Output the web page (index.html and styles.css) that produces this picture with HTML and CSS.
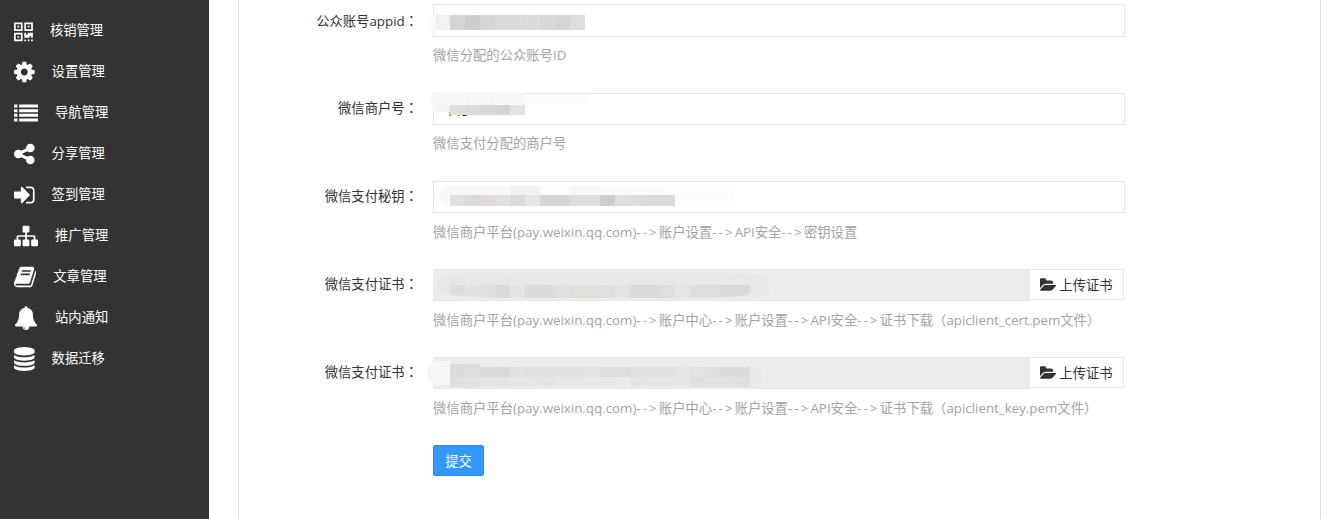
FILE: index.html
```html
<!DOCTYPE html>
<html lang="zh-CN">
<head>
<meta charset="utf-8">
<title>支付设置</title>
<link rel="stylesheet" href="styles.css">
</head>
<body>
<aside class="sidebar">
  <ul class="nav">
    <li class="nav-item"><svg class="ico w19" viewBox="0 0 1408 1792"><path fill-rule="evenodd" d="M0 256h640v640H0zM128 384v384h384V384zM256 512h128v128H256zM768 256h640v640H768zM896 384v384h384V384zM1024 512h128v128h-128zM0 1024h640v640H0zM128 1152v384h384v-384zM256 1280h128v128H256zM768 1024h128v128h128v-128h384v384h-128v-128h-128v128H768zM768 1536h128v128H768zM1024 1536h128v128h-128zM1280 1536h128v128h-128z"/></svg><span>核销管理</span></li>
    <li class="nav-item"><svg class="ico w21" viewBox="128 0 1536 1792"><path d="M1152 896q0-106-75-181t-181-75-181 75-75 181 75 181 181 75 181-75 75-181zm512-109v222q0 12-8 23t-20 13l-185 28q-19 54-39 91 35 50 107 138 10 12 10 25t-9 23q-27 37-99 108t-94 71q-12 0-26-9l-138-108q-44 23-91 38-16 136-29 186-7 28-36 28h-222q-14 0-24.5-8.5t-11.5-21.5l-28-184q-49-16-90-37l-141 107q-10 9-25 9-14 0-25-11-126-114-165-168-7-10-7-23 0-12 8-23 15-21 51-66.5t54-70.5q-27-50-41-99l-183-27q-13-2-21-12.5t-8-23.5v-222q0-12 8-23t19-13l186-28q14-46 39-92-40-57-107-138-10-12-10-24 0-10 9-23 26-36 98.5-107.5t94.5-71.5q13 0 26 10l138 107q44-23 91-38 16-136 29-186 7-28 36-28h222q14 0 24.5 8.5t11.5 21.5l28 184q49 16 90 37l142-107q9-9 24-9 13 0 25 10 129 119 165 170 7 8 7 22 0 12-8 23-15 21-51 66.5t-54 70.5q26 50 41 98l183 28q13 2 21 12.5t8 23.5z"/></svg><span>设置管理</span></li>
    <li class="nav-item"><svg class="ico w24" viewBox="0 0 1792 1792"><path d="M0 256h256v224H0zM384 256h1408v224H384zM0 608h256v224H0zM384 608h1408v224H384zM0 960h256v224H0zM384 960h1408v224H384zM0 1312h256v224H0zM384 1312h1408v224H384z"/></svg><span>导航管理</span></li>
    <li class="nav-item"><svg class="ico w21" viewBox="128 0 1536 1792"><path d="M1344 1024q133 0 226.5 93.5t93.5 226.5-93.5 226.5-226.5 93.5-226.5-93.5-93.5-226.5q0-12 2-34l-360-180q-92 86-218 86-133 0-226.5-93.5t-93.5-226.5 93.5-226.5 226.5-93.5q126 0 218 86l360-180q-2-22-2-34 0-133 93.5-226.5t226.5-93.5 226.5 93.5 93.5 226.5-93.5 226.5-226.5 93.5q-126 0-218-86l-360 180q2 22 2 34t-2 34l360 180q92-86 218-86z"/></svg><span>分享管理</span></li>
    <li class="nav-item"><svg class="ico w21" viewBox="128 0 1536 1792"><path d="M1312 896q0 26-19 45l-544 544q-19 19-45 19t-45-19-19-45v-288h-448q-26 0-45-19t-19-45v-384q0-26 19-45t45-19h448v-288q0-26 19-45t45-19 45 19l544 544q19 19 19 45zm352-352v704q0 119-84.5 203.5t-203.5 84.5h-320q-13 0-22.5-9.5t-9.5-22.5q0-4-1-20t-.5-26.5 3-23.5 10-19.5 20.5-6.5h320q66 0 113-47t47-113v-704q0-66-47-113t-113-47h-312l-11.5-1-11.5-3-8-5.5-7-9-2-13.5q0-4-1-20t-.5-26.5 3-23.5 10-19.5 20.5-6.5h320q119 0 203.5 84.5t84.5 203.5z"/></svg><span>签到管理</span></li>
    <li class="nav-item"><svg class="ico w24" viewBox="0 0 1792 1792"><path d="M1792 1248v320q0 40-28 68t-68 28h-320q-40 0-68-28t-28-68v-320q0-40 28-68t68-28h96v-192h-512v192h96q40 0 68 28t28 68v320q0 40-28 68t-68 28h-320q-40 0-68-28t-28-68v-320q0-40 28-68t68-28h96v-192h-512v192h96q40 0 68 28t28 68v320q0 40-28 68t-68 28h-320q-40 0-68-28t-28-68v-320q0-40 28-68t68-28h96v-192q0-52 38-90t90-38h512v-192h-96q-40 0-68-28t-28-68v-320q0-40 28-68t68-28h320q40 0 68 28t28 68v320q0 40-28 68t-68 28h-96v192h512q52 0 90 38t38 90v192h96q40 0 68 28t28 68z"/></svg><span>推广管理</span></li>
    <li class="nav-item"><svg class="ico w22" viewBox="64 0 1664 1792"><path d="M1703 478q40 57 18 129l-275 906q-19 64-76.5 107.5t-122.5 43.5h-923q-77 0-148.5-53.5t-99.5-131.5q-24-67-2-127 0-4 3-27t4-37q1-8-3-21.5t-3-19.5q2-11 8-21t16.5-23.5 16.5-23.5q23-38 45-91.5t30-91.5q3-10 .5-30t-.5-28q3-11 17-28t17-23q21-36 42-92t25-90q1-9-2.5-32t.5-28q4-13 22-30.5t22-22.5q19-26 42.5-84.5t27.5-96.5q1-8-3-25.5t-2-26.5q2-8 9-18t18-23 17-21q8-12 16.5-30.5t15-35 16-36 19.5-32 26.5-23.5 36-11.5 47.5 5.5l-1 3q38-9 51-9h761q74 0 114 56t18 130l-274 906q-36 119-71.5 153.5t-128.5 34.5h-869q-27 0-38 15-11 16-1 43 24 70 144 70h923q29 0 56-15.5t35-41.5l300-987q7-22 5-57 38 15 59 43zm-1064 2q-4 13 2 22.5t20 9.5h608q13 0 25.5-9.5t16.5-22.5l21-64q4-13-2-22.5t-20-9.5h-608q-13 0-25.5 9.5t-16.5 22.5zm-83 256q-4 13 2 22.5t20 9.5h608q13 0 25.5-9.5t16.5-22.5l21-64q4-13-2-22.5t-20-9.5h-608q-13 0-25.5 9.5t-16.5 22.5z"/></svg><span>文章管理</span></li>
    <li class="nav-item"><svg class="ico w24" viewBox="0 0 1792 1792"><path d="M912 1696q0-16-16-16-59 0-101.5-42.5t-42.5-101.5q0-16-16-16t-16 16q0 73 51.5 124.5t124.5 51.5q16 0 16-16zm816-288q0 52-38 90t-90 38h-448q0 106-75 181t-181 75-181-75-75-181h-448q-52 0-90-38t-38-90q50-42 91-88t85-119.5 74.5-158.5 50-206 19.5-260q0-152 117-282.5t307-158.5q-8-19-8-39 0-40 28-68t68-28 68 28 28 68q0 20-8 39 190 28 307 158.5t117 282.5q0 139 19.5 260t50 206 74.5 158.5 85 119.5 91 88z"/></svg><span>站内通知</span></li>
    <li class="nav-item"><svg class="ico w21" viewBox="128 0 1536 1792"><path d="M896 768q237 0 443-43t325-127v170q0 69-103 128t-280 93.5-385 34.5-385-34.5-280-93.5-103-128v-170q119 84 325 127t443 43zm0 768q237 0 443-43t325-127v170q0 69-103 128t-280 93.5-385 34.5-385-34.5-280-93.5-103-128v-170q119 84 325 127t443 43zm0-384q237 0 443-43t325-127v170q0 69-103 128t-280 93.5-385 34.5-385-34.5-280-93.5-103-128v-170q119 84 325 127t443 43zm0-1152q208 0 385 34.5t280 93.5 103 128v128q0 69-103 128t-280 93.5-385 34.5-385-34.5-280-93.5-103-128v-128q0-69 103-128t280-93.5 385-34.5z"/></svg><span>数据迁移</span></li>
  </ul>
</aside>
<main class="main">
  <div class="panel">
    <form class="form">
      <div class="row row-first">
        <label class="label">公众账号appid<span class="cjk-mid" lang="zh-Hant">：</span></label>
        <div class="field">
          <div class="input"><i class="glow g1"></i><i class="mosaic m1"></i></div>
          <p class="hint">微信分配的公众账号ID</p>
        </div>
      </div>
      <div class="row">
        <label class="label">微信商户号<span class="cjk-mid" lang="zh-Hant">：</span></label>
        <div class="field">
          <div class="input"><span class="value">145</span><i class="glow g2"></i><i class="mosaic m2"></i></div>
          <p class="hint">微信支付分配的商户号</p>
        </div>
      </div>
      <div class="row">
        <label class="label">微信支付秘钥<span class="cjk-mid" lang="zh-Hant">：</span></label>
        <div class="field">
          <div class="input"><i class="glow g3"></i><i class="mosaic m3"></i></div>
          <p class="hint hint-long">微信商户平台(pay.weixin.qq.com)<span class="arrow">--&gt;</span>账户设置<span class="arrow">--&gt;</span>API安全<span class="arrow">--&gt;</span>密钥设置</p>
        </div>
      </div>
      <div class="row">
        <label class="label">微信支付证书<span class="cjk-mid" lang="zh-Hant">：</span></label>
        <div class="field">
          <div class="group">
            <div class="input disabled"><i class="glow g4"></i><i class="mosaic m4"></i></div>
            <button type="button" class="upload"><svg class="folder" viewBox="0 0 1920 1792"><path d="M1815 952q0 31-31 66l-336 396q-43 51-120.5 86.5t-143.5 35.5h-1088q-34 0-60.5-13t-26.5-43q0-31 31-66l336-396q43-51 120.5-86.5t143.5-35.5h1088q34 0 60.5 13t26.5 43zm-343-344v160h-832q-94 0-197 47.5t-164 119.5l-337 396-5 6q0-4-.5-12.5t-.5-12.5v-960q0-92 66-158t158-66h320q92 0 158 66t66 158v32h544q92 0 158 66t66 158z"/></svg>上传证书</button>
          </div>
          <p class="hint hint-long">微信商户平台(pay.weixin.qq.com)<span class="arrow">--&gt;</span>账户中心<span class="arrow">--&gt;</span>账户设置<span class="arrow">--&gt;</span>API安全<span class="arrow">--&gt;</span>证书下载<span class="cjk-mid" lang="zh-Hant">（</span>apiclient_cert.pem文件<span class="cjk-mid" lang="zh-Hant">）</span></p>
        </div>
      </div>
      <div class="row">
        <label class="label">微信支付证书<span class="cjk-mid" lang="zh-Hant">：</span></label>
        <div class="field">
          <div class="group">
            <div class="input disabled"><i class="glow g5"></i><i class="mosaic m5"></i></div>
            <button type="button" class="upload"><svg class="folder" viewBox="0 0 1920 1792"><path d="M1815 952q0 31-31 66l-336 396q-43 51-120.5 86.5t-143.5 35.5h-1088q-34 0-60.5-13t-26.5-43q0-31 31-66l336-396q43-51 120.5-86.5t143.5-35.5h1088q34 0 60.5 13t26.5 43zm-343-344v160h-832q-94 0-197 47.5t-164 119.5l-337 396-5 6q0-4-.5-12.5t-.5-12.5v-960q0-92 66-158t158-66h320q92 0 158 66t66 158v32h544q92 0 158 66t66 158z"/></svg>上传证书</button>
          </div>
          <p class="hint hint-long">微信商户平台(pay.weixin.qq.com)<span class="arrow">--&gt;</span>账户中心<span class="arrow">--&gt;</span>账户设置<span class="arrow">--&gt;</span>API安全<span class="arrow">--&gt;</span>证书下载<span class="cjk-mid" lang="zh-Hant">（</span>apiclient_key.pem文件<span class="cjk-mid" lang="zh-Hant">）</span></p>
        </div>
      </div>
      <div class="row">
        <span></span>
        <div class="field"><button type="button" class="submit">提交</button></div>
      </div>
    </form>
  </div>
</main>
</body>
</html>
```
FILE: styles.css
```css
* { box-sizing: border-box; }
html, body { height: 100%; }
body {
  margin: 0;
  display: flex;
  overflow: hidden;
  background: #fff;
  font-family: "Open Sans", "Noto Sans CJK SC", sans-serif;
  font-size: 13.33px;
  color: #333;
}
.sidebar { width: 209px; flex: none; background: #333; color: #fff; }
.nav { list-style: none; margin: 0; padding: 9px 0 0 14px; }
.nav-item { height: 41px; display: flex; align-items: center; gap: 17px; }
.ico { height: 24px; margin-top: 3px; fill: #fff; flex: none; }
.w19 { width: 18.9px; }
.w21 { width: 20.6px; }
.w22 { width: 22.3px; }
.w24 { width: 24px; }
.main { flex: 1; padding: 0 7px 0 29px; }
.panel {
  height: 100%;
  border-left: 1px solid #ddd;
  border-right: 1px solid #ddd;
  padding-top: 4px;
}
.row {
  display: grid;
  grid-template-columns: 179px 692px;
  column-gap: 15px;
  margin-bottom: 28px;
}
.label { text-align: right; line-height: 30px; color: #333; }
.row-first .label { line-height: 33px; }
.row-first .input { height: 33px; }
.cjk-mid { font-family: "Noto Sans CJK TC", sans-serif; }
.arrow { letter-spacing: 2.1px; }
.field { min-width: 0; }
.input {
  position: relative;
  height: 32px;
  border: 1px solid #e6e6e6;
  background: #fff;
}
.value {
  display: block;
  padding-left: 12px;
  line-height: 30px;
  margin-top: 2px;
  color: #333;
}
.group { display: flex; align-items: flex-start; }
.group .input { flex: 1; }
.disabled { background: #ececec; border-color: #e8e8e8; }
.upload {
  width: 94px;
  height: 31px;
  margin-right: 1px;
  border: 1px solid #e6e6e6;
  border-left: 0;
  background: #fff;
  color: #333;
  font: inherit;
  padding: 0;
  display: flex;
  align-items: center;
  justify-content: center;
  gap: 2px;
}
.folder { width: 17px; height: 16px; fill: #333; }
.hint { margin: 8px 0 0; line-height: 20px; color: #a3a3a3; white-space: nowrap; }
.hint-long { margin: 9px 0 -1px; }
.submit {
  width: 51px;
  height: 31px;
  border: 1px solid #2d8ae8;
  border-radius: 2px;
  background: #39f;
  color: #fff;
  font: inherit;
  padding: 0;
}
.mosaic, .glow { position: absolute; display: block; }
.glow { background: #fafafa; border-radius: 10px; }

/* Blurred-out field values: 15px mosaic cells */
.g1 { left: -7px; top: 10px; width: 12px; height: 15px; background: #fbfbfb; }
.m1 {
  left: 1px; top: 10px; width: 150px; height: 15px;
  background: linear-gradient(90deg,
    #f3f2f0 0 15px, #d4d4d4 15px 30px, #cdcdcd 30px 45px, #d6d6d6 45px 60px, #dbd9d8 60px 75px,
    #d9dad9 75px 90px, #dcdcdc 90px 105px, #d8d8d8 105px 120px, #d4d6d5 120px 135px, #dddfdf 135px 150px);
}
.g2 {
  left: -3px; top: -2px; width: 94px; height: 13px; border-radius: 2px;
  background: linear-gradient(90deg, #f8f8f8 0 36px, #f6f6f6 36px 62px, #f8f8f8 62px 94px);
}
.g2::after {
  content: "";
  position: absolute;
  left: 94px; top: 2px; width: 65px; height: 11px;
  background: #fcfcfc;
}
.m2 {
  left: 16px; top: 11px; width: 75px; height: 10px;
  background: linear-gradient(90deg, #dde0dd 0 15px, #dcdcdc 15px 30px, #d8d8d8 30px 45px, #d5d5d5 45px 60px, #e2e4e2 60px 75px);
}
.m2::before {
  content: "";
  position: absolute;
  left: -15px; top: 0; width: 15px; height: 7px;
  background: #f6f1f1;
}
.g3 {
  left: 5px; top: 4px; width: 296px; height: 20px;
  background: linear-gradient(90deg, #f8f8f8 0 66px, #fbfbfb 66px 71px, #f2f2f2 71px 101px, #fcfcfc 101px 131px, #f7f7f7 131px 161px, #fbfbfb 161px 221px, #fcfcfc 221px);
}
.m3 {
  left: 16px; top: 13px; width: 225px; height: 11px;
  background: linear-gradient(90deg,
    #dee0e2 0 15px, #dcd9d9 15px 30px, #e0dbd8 30px 45px, #e0e0e0 45px 60px, #dadada 60px 75px,
    #e5e5e5 75px 90px, #d6d6d6 90px 105px, #d5d7d5 105px 120px, #dddddd 120px 135px, #dfdddb 135px 150px,
    #cfcdd0 150px 165px, #dfdfdf 165px 180px, #dddddd 180px 195px, #d9dcda 195px 210px, #dbdbdd 210px 225px);
}
.g4 {
  left: 4px; top: 2px; width: 331px; height: 26px;
  background: #e8e8e8;
  border-radius: 40px 60px 90px 60px / 8px 8px 4px 8px;
}
.m4 {
  left: 16px; top: 8px; width: 300px; height: 20px;
  border-radius: 0 0 70px 70px / 0 0 5px 5px;
  background:
    linear-gradient(90deg, #e6e6e6 0 15px, #e8e8e8 15px 30px, #e6e6e4 30px 60px, #e7e7e7 60px 90px, #e8e8e6 90px 180px, #e6e7e7 180px 240px, #e8e8e8 240px) 0 0 / 100% 7px no-repeat,
    linear-gradient(90deg,
      #dedede 0 15px, #e2e2e2 15px 30px, #dfdfdb 30px 45px, #dadada 45px 60px, #e4e4e4 60px 75px,
      #dcdcdc 75px 105px, #e1e1dd 105px 120px, #dfdfdb 120px 150px, #dee1df 150px 165px, #e2e3e3 165px 180px,
      #dadada 180px 210px, #dfdfdf 210px 225px, #e3e6e4 225px 240px, #dddfdd 240px 255px, #dcdee1 255px 270px,
      #dadada 270px 300px) 0 0 / 100% 100% no-repeat;
}
.g5 {
  left: -7px; top: 3px; width: 24px; height: 24px;
  background: #f6f6f6;
  border-radius: 12px 0 0 12px;
}
.g5::after {
  content: "";
  position: absolute;
  left: 321px; top: 6px; width: 14px; height: 20px;
  background: #e8eae8;
  border-radius: 0 8px 8px 0;
}
.m5 {
  left: 16px; top: 9px; width: 300px; height: 20px;
  background:
    linear-gradient(90deg,
      #dcdcdc 0 15px, #dddddd 15px 30px, #dadada 30px 45px, #d9d9d9 45px 60px, #e2e2de 60px 75px,
      #dfdfdf 75px 90px, #e0e0e0 90px 105px, #e0e0e2 105px 120px, #e0e0e4 120px 135px, #e4e4e0 135px 150px,
      #dddddd 150px 180px, #dfdfdf 180px 195px, #dee0e4 195px 210px, #e0e0e0 210px 225px, #e4e6e4 225px 240px,
      #e2e4e2 240px 255px, #dedede 255px 270px, #dcdcdc 270px 300px) 0 0 / 100% 10px no-repeat,
    linear-gradient(90deg,
      #dfdfdf 0 15px, #e3e3e3 15px 30px, #e5e5e5 30px 45px, #e4e4e0 45px 60px, #e6e6e6 60px 90px,
      #e4e4e4 90px 105px, #e7e7e7 105px 165px, #ebebeb 165px 180px, #e4e4e4 180px 195px, #e6e6e6 195px 225px,
      #e6e8e6 225px 240px, #e0e0e0 240px 255px, #e1e3e1 255px 285px, #dfdfdf 285px 300px) 0 10px / 100% 10px no-repeat;
}
.m5::before {
  content: "";
  position: absolute;
  left: 0; top: -3px; width: 30px; height: 3px;
  background: #dcdcdc;
}
```
